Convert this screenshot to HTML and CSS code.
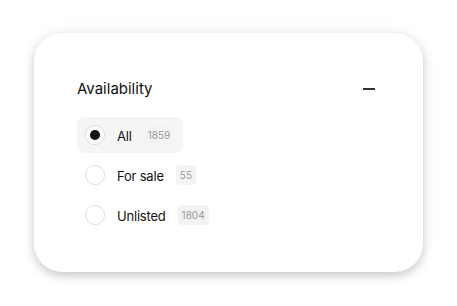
FILE: index.html
```html
<!DOCTYPE html>
<html lang="en">
<head>
    <meta charset="UTF-8">
    <meta name="viewport" content="width=device-width, initial-scale=1.0">
    <title>Availability filter</title>
    <link rel="stylesheet" href="styles.css">
</head>
<body>
    <div class="card">
        <div class="filter-head">
            <h2 class="filter-title">Availability</h2>
            <span class="collapse-icon"></span>
        </div>

        <div class="options">
            <label class="option selected">
                <span class="radio"></span>
                <span class="option-label">All</span>
                <span class="count">1859</span>
            </label>
            <label class="option">
                <span class="radio"></span>
                <span class="option-label">For sale</span>
                <span class="count">55</span>
            </label>
            <label class="option">
                <span class="radio"></span>
                <span class="option-label">Unlisted</span>
                <span class="count">1804</span>
            </label>
        </div>
    </div>
</body>
</html>
```

FILE: styles.css
```css
* {
    margin: 0;
    padding: 0;
    box-sizing: border-box;
}

body {
    background-color: #fff;
    color: #111;
    font-family: Inter, 'Noto Sans', sans-serif;
    padding: 33px 34px;
}

.card {
    width: 389px;
    height: 239px;
    background: #fff;
    border-radius: 28px;
    box-shadow: 0 4px 10px rgba(0, 0, 0, 0.18), 0 0 18px rgba(0, 0, 0, 0.06);
    padding: 46px 48px 0 43px;
}

.filter-head {
    display: flex;
    align-items: center;
    justify-content: space-between;
    height: 20px;
}

.filter-title {
    font-size: 15px;
    font-weight: 400;
    line-height: 20px;
    color: #111;
}

.collapse-icon {
    width: 12px;
    height: 2px;
    background-color: #333;
}

.options {
    display: flex;
    flex-direction: column;
    align-items: flex-start;
    gap: 4px;
    margin-top: 18px;
}

.option {
    display: flex;
    align-items: center;
    height: 36px;
    padding: 0 9px 0 8px;
    border-radius: 8px;
    cursor: pointer;
}

.option.selected {
    background-color: #f5f5f5;
}

.radio {
    width: 20px;
    height: 20px;
    border-radius: 50%;
    border: 1px solid #ddd;
    background: #fff;
    display: flex;
    align-items: center;
    justify-content: center;
}

.option.selected .radio::after {
    content: '';
    width: 10px;
    height: 10px;
    border-radius: 50%;
    background-color: #111;
}

.option-label {
    font-size: 13px;
    letter-spacing: -0.2px;
    line-height: 20px;
    padding-top: 1px;
    margin-left: 12px;
    color: #111;
}

.count {
    margin-left: 12px;
    height: 20px;
    line-height: 20px;
    padding: 0 4px;
    border-radius: 4px;
    background-color: #f3f3f3;
    color: #999;
    font-size: 10px;
}
```
